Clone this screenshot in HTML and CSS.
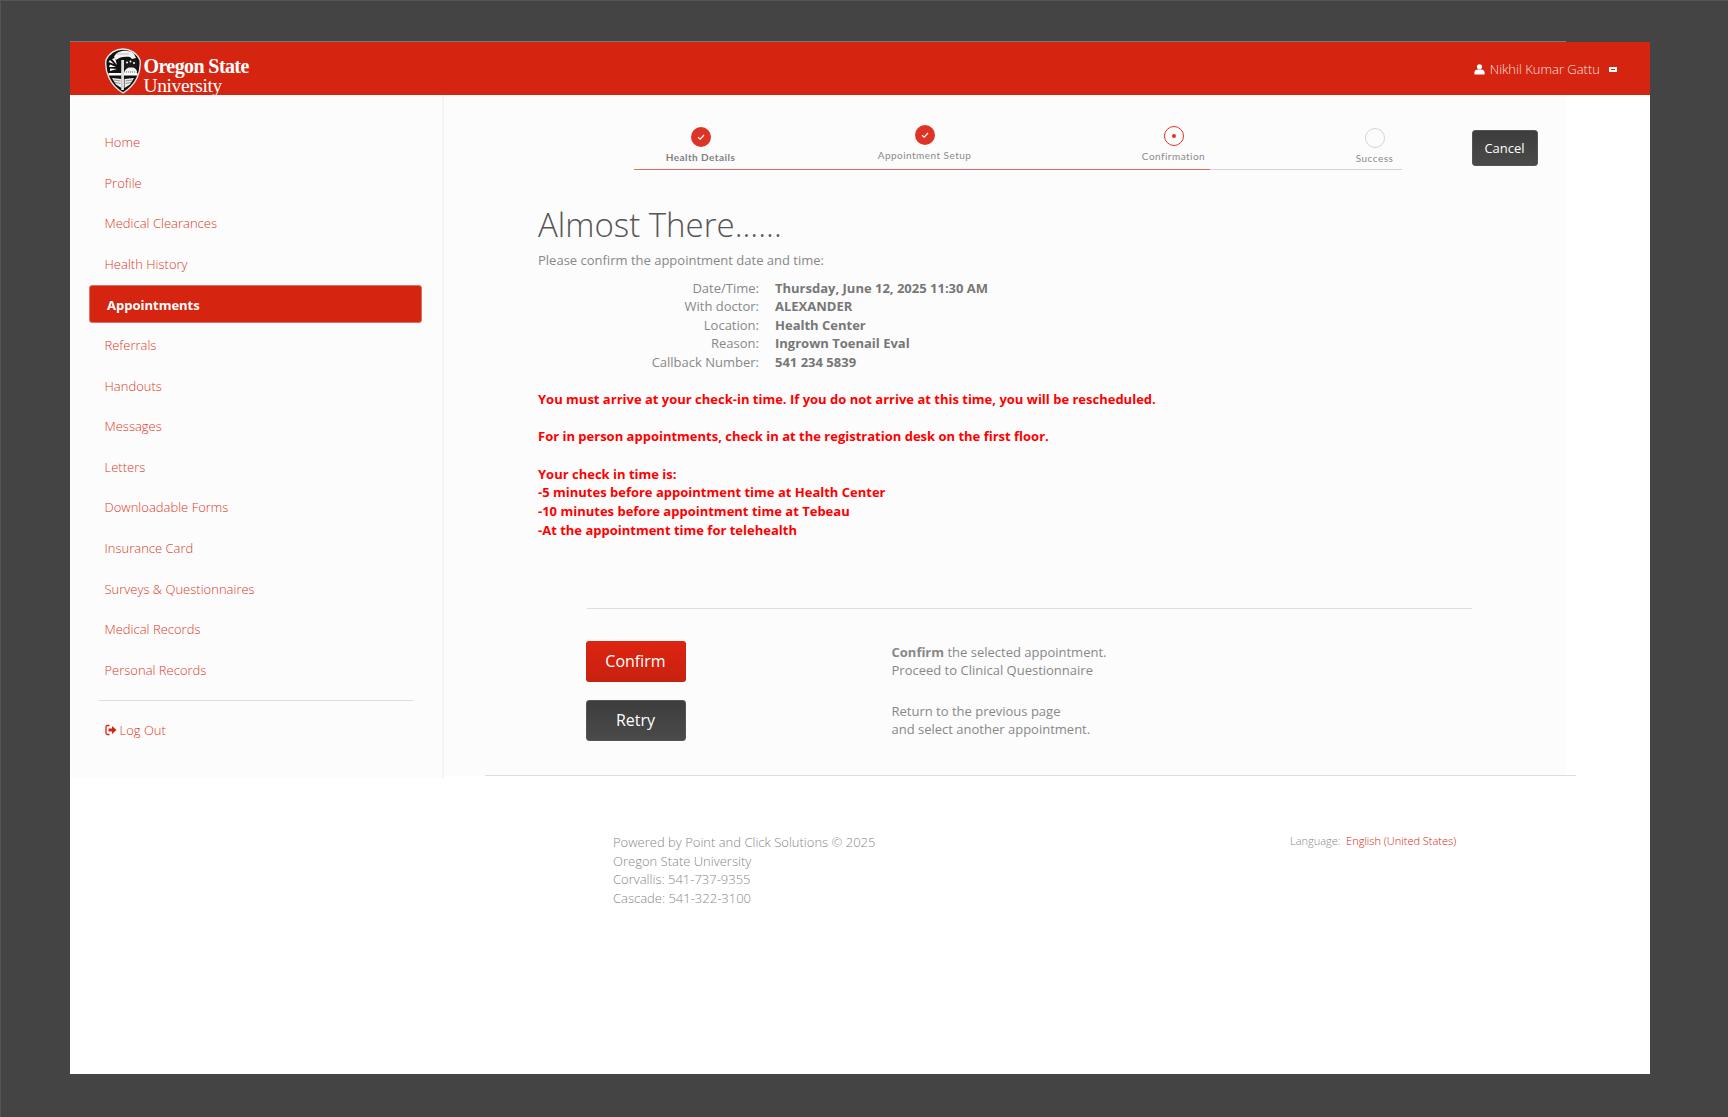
FILE: index.html
```html
<!DOCTYPE html>
<html lang="en">
<head>
<meta charset="utf-8">
<title>Appointments</title>
<link rel="stylesheet" href="styles.css">
</head>
<body>
<div class="app">
  <div class="edge"></div>
  <header class="topbar">
    <a class="logo">
      <svg class="shield" viewBox="0 0 36 46" width="36" height="46">
        <path d="M18 1 C25 1 32 5 35 12 C36.500 24 31 37 18 45 C5 37 -0.500 24 1 12 C4 5 11 1 18 1 Z" fill="#111" stroke="#e8e8e8" stroke-width="1.400"/>
        <path d="M9 9 C11 4 17 2 22 3 C25 3 28 4 29 6 L31 10 L27 11 L25 9 C20 8 14 9 11 12 Z" fill="#f4f4f4"/>
        <path d="M12 6 L24 6" stroke="#999" stroke-width=".6"/>
        <path d="M3.500 14 L9 16 L5 12 Z M4 19 L11 19 L5 16.500 Z M5 23 L12 21 L5 20.500 Z M7 11 L12 17 L10 10 Z" fill="#fff"/>
        <rect x="19" y="12" width="13" height="8" fill="#1a1a1a"/>
        <circle cx="22" cy="14.500" r="1" fill="#fff"/><circle cx="25.500" cy="13.500" r="1" fill="#fff"/><circle cx="29" cy="15" r="1" fill="#fff"/>
        <path d="M19 25 C20 20 24 19 26 19.500 C29 19 32 21 32 24 L31 27 H19 Z" fill="#f2f2f2"/>
        <path d="M21 24 H30" stroke="#444" stroke-width=".8" stroke-dasharray="1 1"/>
        <rect x="3.500" y="25" width="29" height="2.500" fill="#fff"/>
        <path d="M7 30 L16.500 31 L16.500 40 L11 36.500 Z M29 30 L19.500 31 L19.500 40 L25 36.500 Z" fill="#eee"/>
        <path d="M9 32 L15.500 33 M10 34.500 L15.500 35.500 M27 32 L20.500 33 M26 34.500 L20.500 35.500" stroke="#555" stroke-width=".6"/>
        <rect x="16.200" y="12" width="2.800" height="30" fill="#ddd"/>
      </svg>
      <span class="wordmark"><b>Oregon State</b><span>University</span></span>
    </a>
    <div class="user">
      <svg class="user-icon" viewBox="0 0 12 12" width="11" height="11"><circle cx="6" cy="3" r="2.800" fill="#fff"/><path d="M0.500 11.500 V9 C0.500 7 2.500 6 4 6 H8 C9.500 6 11.500 7 11.500 9 V11.500 Z" fill="#fff"/></svg>
      <span class="user-name">Nikhil Kumar Gattu</span>
      <span class="user-flag"></span>
    </div>
  </header>
  <div class="body">
    <nav class="sidebar">
      <a class="nav-item">Home</a>
      <a class="nav-item">Profile</a>
      <a class="nav-item">Medical Clearances</a>
      <a class="nav-item">Health History</a>
      <a class="nav-item active">Appointments</a>
      <a class="nav-item">Referrals</a>
      <a class="nav-item">Handouts</a>
      <a class="nav-item">Messages</a>
      <a class="nav-item">Letters</a>
      <a class="nav-item">Downloadable Forms</a>
      <a class="nav-item">Insurance Card</a>
      <a class="nav-item">Surveys &amp; Questionnaires</a>
      <a class="nav-item">Medical Records</a>
      <a class="nav-item">Personal Records</a>
      <hr class="nav-rule">
      <a class="nav-item logout">
        <svg viewBox="0 0 12 12" width="12" height="12"><path d="M4.500 1.500 H2.500 C1.500 1.500 1 2 1 3 V9 C1 10 1.500 10.500 2.500 10.500 H4.500" fill="none" stroke="#d5240f" stroke-width="1.300"/><path d="M3.500 4.500 H7 V2 L11.500 6 L7 10 V7.500 H3.500 Z" fill="#d5240f"/></svg>
        Log Out
      </a>
    </nav>
    <main class="main">
      <div class="step-row">
        <div class="stepper">
          <div class="step step-1"><span class="dot done"><svg viewBox="0 0 10 10" width="10" height="10"><path d="M2 5.200 L4.200 7.200 L8 3" fill="none" stroke="#fff" stroke-width="1.200"/></svg></span><span class="step-label dark">Health Details</span></div>
          <div class="step step-2"><span class="dot done"><svg viewBox="0 0 10 10" width="10" height="10"><path d="M2 5.200 L4.200 7.200 L8 3" fill="none" stroke="#fff" stroke-width="1.200"/></svg></span><span class="step-label">Appointment Setup</span></div>
          <div class="step step-3"><span class="dot current"><i></i></span><span class="step-label">Confirmation</span></div>
          <div class="step step-4"><span class="dot todo"></span><span class="step-label">Success</span></div>
        </div>
        <a class="btn btn-dark cancel">Cancel</a>
      </div>
      <section class="details">
        <h1>Almost There......</h1>
        <p class="intro">Please confirm the appointment date and time:</p>
        <dl class="facts">
          <dt>Date/Time:</dt><dd>Thursday, June 12, 2025 11:30 AM</dd>
          <dt>With doctor:</dt><dd>ALEXANDER</dd>
          <dt>Location:</dt><dd>Health Center</dd>
          <dt>Reason:</dt><dd>Ingrown Toenail Eval</dd>
          <dt>Callback Number:</dt><dd>541 234 5839</dd>
        </dl>
        <p class="warn">You must arrive at your check-in time. If you do not arrive at this time, you will be rescheduled.</p>
        <p class="warn">For in person appointments, check in at the registration desk on the first floor.</p>
        <p class="warn">Your check in time is:<br>-5 minutes before appointment time at Health Center<br>-10 minutes before appointment time at Tebeau<br>-At the appointment time for telehealth</p>
      </section>
      <div class="actions">
        <div class="action">
          <a class="btn btn-red big">Confirm</a>
          <p><b>Confirm</b> the selected appointment.<br>Proceed to Clinical Questionnaire</p>
        </div>
        <div class="action">
          <a class="btn btn-dark big">Retry</a>
          <p>Return to the previous page<br>and select another appointment.</p>
        </div>
      </div>
      <div class="main-rule"></div>
    </main>
  </div>
  <footer class="footer">
    <p class="legal">Powered by Point and Click Solutions © 2025<br>Oregon State University<br>Corvallis: 541-737-9355<br>Cascade: 541-322-3100</p>
    <p class="lang">Language:&nbsp; <a>English (United States)</a></p>
  </footer>
</div>
</body>
</html>
```
FILE: styles.css
```css
* { box-sizing: border-box; }
html, body { margin: 0; height: 100%; }
body {
  background: #444;
  border-top: 1px solid #555;
  border-left: 1px solid #555;
  padding: 40px 78px 43px 68.500px;
  font-family: "Open Sans", "Liberation Sans", sans-serif;
  font-size: 13px;
  color: #888;
}
.app { height: 1033px; display: flex; flex-direction: column; }
.edge { height: 1px; width: 1496px; background: #7a7a7a; flex: none; }
.topbar {
  height: 53px;
  background: #d5240f;
  display: flex;
  align-items: center;
  justify-content: space-between;
  padding: 0 33px 0 35px;
  flex: none;
}
.logo { display: flex; align-items: flex-start; height: 53px; padding-top: 6px; color: #fff; }
.shield { display: block; }
.wordmark { display: flex; flex-direction: column; font-family: "Liberation Serif", serif; margin-left: 3px; margin-top: 8.500px; line-height: 19px; }
.wordmark b { font-size: 20px; letter-spacing: -0.6px; }
.wordmark span { font-size: 19.500px; letter-spacing: -0.4px; }
.user { display: flex; align-items: center; color: #fff; font-weight: 300; margin-top: 1px; }
.user-icon { margin-right: 5px; }
.user-name { opacity: .85; }
.user-flag { width: 8px; height: 5px; margin-left: 9px; background: #fff; position: relative; }
.user-flag::after { content: ""; position: absolute; left: 2px; top: 2px; width: 4px; height: 1px; background: #d5240f; }
.body { display: flex; height: 683px; flex: none; background: #fff; }
.sidebar {
  width: 374px;
  flex: none;
  background: #fcfcfc;
  border-right: 2px solid #f5f5f5;
  padding: 27px 20px 0 19.500px;
  display: flex;
  flex-direction: column;
}
.nav-item {
  height: 40.600px;
  line-height: 40.600px;
  padding-left: 15.500px;
  font-weight: 300;
  color: #dc3a28;
  font-size: 13px;
  flex: none;
}
.nav-item.active {
  height: 38px;
  line-height: 38px;
  margin: 1px 0 1.600px;
  background: #d5240f;
  border: 1px solid #e4705f;
  color: #fff;
  font-weight: 700;
  border-radius: 3px;
  padding-left: 17px;
}
.nav-rule { border: 0; border-top: 1px solid #ddd; margin: 10px 10px 9px 10px; width: 314px; }
.logout { display: flex; align-items: center; gap: 3px; height: 40px; line-height: 40px; }
.main { width: 1122px; flex: none; background: #fcfcfc; position: relative; height: 681px; }
.step-row { display: flex; align-items: flex-start; padding: 0 0 0 190px; height: 75px; }
.stepper {
  width: 768px;
  height: 75px;
  flex: none;
  display: flex;
  align-items: flex-start;
  border-bottom: 1px solid #d5d5d5;
  position: relative;
}
.stepper::after { content: ""; position: absolute; left: 0; bottom: -1px; width: 576px; height: 1px; background: #e36a5c; }
.step { display: flex; flex-direction: column; align-items: center; flex: none; }
.step-1 { width: 134px; padding-top: 32px; }
.step-2 { width: 314px; padding-top: 30px; }
.step-3 { width: 184px; padding-top: 31px; }
.step-4 { width: 54px; margin-left: 82px; padding-top: 33px; }
.dot { width: 20px; height: 20px; border-radius: 50%; display: flex; align-items: center; justify-content: center; flex: none; }
.dot.done { background: #de3427; }
.dot.current { border: 1.500px solid #de3427; }
.dot.current i { width: 4px; height: 4px; background: #de3427; border-radius: 50%; }
.dot.todo { border: 1.500px solid #d4d4d4; }
.step-label { font-family: "Lato", sans-serif; font-size: 10px; letter-spacing: .47px; color: #8a8a8a; line-height: 14px; margin-top: 3px; white-space: nowrap; }
.step-label.dark { font-weight: 700; color: #808080; letter-spacing: .45px; }
.btn { display: flex; align-items: center; justify-content: center; color: #fff; border-radius: 3px; flex: none; }
.btn-dark { background: linear-gradient(#3d3d3d, #4a4a4a); border: 1px solid #555; }
.btn-red { background: linear-gradient(#dd2410, #c6220f); }
.cancel { width: 66px; height: 36px; margin-left: 70px; margin-top: 35px; font-size: 13px; }
.details { padding-left: 94.500px; }
h1 { margin: 28.500px 0 0; font-size: 33px; line-height: 51px; font-weight: 300; color: #555; }
.intro { margin: .5px 0 0; line-height: 20px; height: 20px; }
.facts { margin: 8.500px 0 0; display: grid; grid-template-columns: 221px 1fr; column-gap: 16px; line-height: 18.600px; }
.facts dt { text-align: right; }
.facts dd { margin: 0; font-weight: 700; color: #777; }
.warn { margin: 18.700px 0 0; color: #f00; font-weight: 700; line-height: 18.600px; }
.actions { margin: 0 0 0 143px; padding-top: 32px; border-top: 1px solid #ddd; width: 885px; position: absolute; top: 513px; }
.action { display: flex; align-items: flex-start; height: 59px; }
.action .big { margin-left: -1px; padding-bottom: 2px; }
.action p { margin: 0 0 0 206px; line-height: 18.600px; padding-top: 1.500px; }
.action b { font-weight: 700; }
.big { width: 100px; height: 41px; font-size: 16px; }
.main-rule { position: absolute; left: 41px; top: 680px; width: 1091px; height: 1px; background: #ddd; }
.footer { flex: 1; background: #fff; display: flex; align-items: flex-start; padding: 55px 0 0 543.500px; }
.legal { margin: 0; font-weight: 300; color: #888; line-height: 18.600px; width: 677px; }
.lang { margin: 0; font-weight: 300; font-size: 11px; color: #888; }
.lang a { color: #d5240f; }
```
